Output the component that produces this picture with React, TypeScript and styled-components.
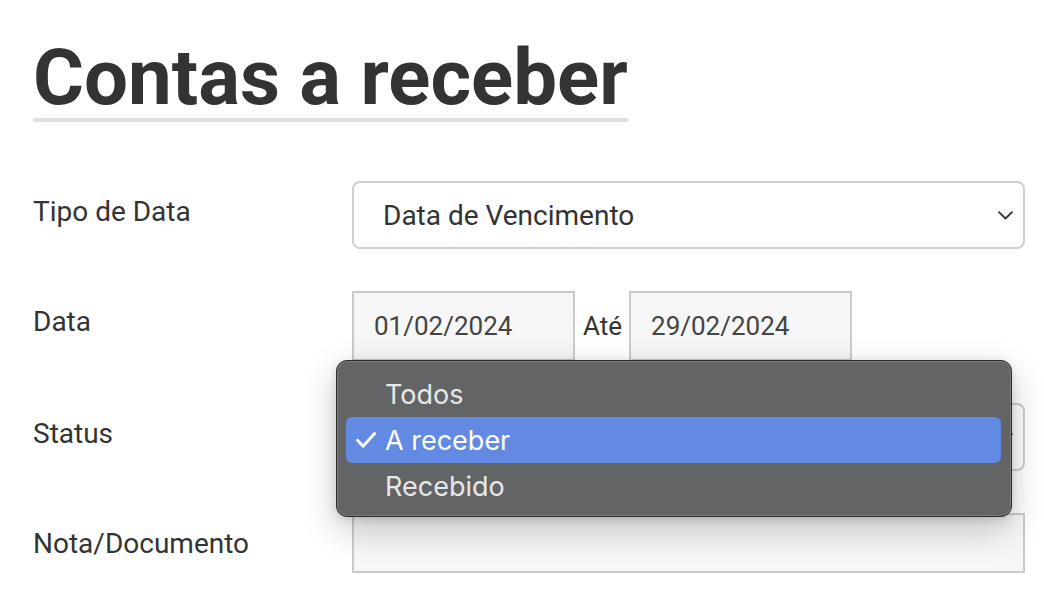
import styled, { createGlobalStyle } from 'styled-components'

const GlobalStyle = createGlobalStyle`
  html, body {
    margin: 0;
    padding: 0;
    background: #fff;
  }
  body {
    font-family: Roboto, 'Liberation Sans', sans-serif;
    color: #333;
  }
`

function Chevron() {
  return (
    <svg width='15' height='9' viewBox='0 0 15 9' aria-hidden='true'>
      <path
        d='M1 1.2l6.5 6.3 6.5-6.3'
        fill='none'
        stroke='#333'
        strokeWidth='1.8'
        strokeLinecap='round'
        strokeLinejoin='round'
      />
    </svg>
  )
}

function Check() {
  return (
    <svg width='20' height='16' viewBox='0 0 20 16' aria-hidden='true'>
      <path
        d='M1.5 8.2l5.6 6.1L18.6 1.5'
        fill='none'
        stroke='#fff'
        strokeWidth='2.8'
        strokeLinecap='round'
        strokeLinejoin='round'
      />
    </svg>
  )
}

const statusOptions = ['Todos', 'A receber', 'Recebido']

export default function App() {
  return (
    <>
      <GlobalStyle />
      <StyledPage>
        <StyledTitle>Contas a receber</StyledTitle>
        <StyledForm>
          <StyledLabel>Tipo de Data</StyledLabel>
          <StyledSelect>
            <span>Data de Vencimento</span>
            <Chevron />
          </StyledSelect>

          <StyledLabel>Data</StyledLabel>
          <StyledDateGroup>
            <StyledInput $width={223} $height={70}>
              01/02/2024
            </StyledInput>
            <span className='ate'>Até</span>
            <StyledInput $width={223} $height={70}>
              29/02/2024
            </StyledInput>
          </StyledDateGroup>

          <StyledLabel>Status</StyledLabel>
          <StyledControl>
            {/* the native select sits under its open menu */}
            <StyledSelect>
              <span />
              <Chevron />
            </StyledSelect>
            <StyledMenu role='listbox'>
              {statusOptions.map((opt) => (
                <StyledMenuItem key={opt} $active={opt === 'A receber'}>
                  <span className='check'>
                    {opt === 'A receber' && <Check />}
                  </span>
                  {opt}
                </StyledMenuItem>
              ))}
            </StyledMenu>
          </StyledControl>

          <StyledLabel>Nota/Documento</StyledLabel>
          <StyledInput $height={60} />
        </StyledForm>
      </StyledPage>
    </>
  )
}

const StyledPage = styled.div`
  padding: 38px 19px 0 33px;
`

const StyledTitle = styled.h1`
  display: inline-block;
  margin: 0;
  font-size: 78px;
  line-height: 80px;
  font-weight: 700;
  color: #333;
  border-bottom: 4px solid #e0e0e0;
`

const StyledForm = styled.div`
  display: grid;
  grid-template-columns: 319px 1fr;
  row-gap: 42px;
  margin-top: 59px;
`

const StyledLabel = styled.div`
  padding-top: 14px;
  font-size: 28px;
  line-height: 33px;
  color: #333;
`

const StyledControl = styled.div`
  position: relative;
`

const StyledSelect = styled.div`
  box-sizing: border-box;
  height: 68px;
  display: flex;
  align-items: center;
  justify-content: space-between;
  padding: 0 10px 0 29px;
  border: 2px solid #cfcfcf;
  border-radius: 8px;
  background: #fff;
  font-size: 28px;
  color: #333;
`

const StyledDateGroup = styled.div`
  display: flex;
  align-items: center;

  .ate {
    margin: 0 7px 0 8px;
    font-size: 26px;
    color: #333;
  }
`

const StyledInput = styled.div<{ $width?: number; $height: number }>`
  box-sizing: border-box;
  width: ${({ $width }) => ($width ? `${$width}px` : '100%')};
  height: ${({ $height }) => $height}px;
  display: flex;
  align-items: center;
  padding: 0 20px;
  border: 2px solid #cacaca;
  background: #f6f6f6;
  font-size: 26px;
  color: #444;
`

const StyledMenu = styled.div`
  position: absolute;
  left: -16px;
  top: -43px;
  z-index: 5;
  box-sizing: border-box;
  width: 676px;
  padding: 10px 10px 7px 9px;
  border: 1px solid #2b2b2c;
  border-radius: 11px;
  background: #636466;
  box-shadow:
    inset 0 0 0 1px rgba(255, 255, 255, 0.16),
    0 12px 34px rgba(0, 0, 0, 0.22),
    0 2px 8px rgba(0, 0, 0, 0.12);
  font-family: Inter, 'Noto Sans', sans-serif;
`

const StyledMenuItem = styled.div<{ $active: boolean }>`
  height: 46px;
  display: flex;
  align-items: center;
  padding-left: 10px;
  border-radius: 6px;
  font-size: 27px;
  color: ${({ $active }) => ($active ? '#fff' : '#e8e8e8')};
  background: ${({ $active }) => ($active ? '#628ae2' : 'transparent')};

  .check {
    width: 29px;
    display: flex;
    align-items: center;
  }
`
